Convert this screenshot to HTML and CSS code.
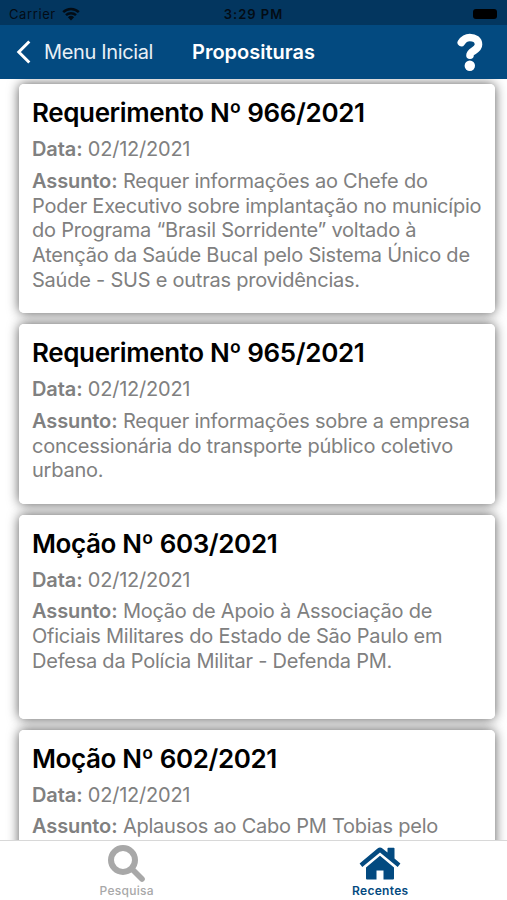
FILE: index.html
```
<!DOCTYPE html>
<html lang="pt-BR">
<head>
  <meta charset="UTF-8">
  <meta name="viewport" content="width=device-width, initial-scale=1">
  <title>Proposituras</title>
  <link rel="stylesheet" href="styles.css">
</head>
<body>

<div class="status-bar">
  <div class="carrier">
    <span>Carrier</span>
    <svg class="wifi" viewBox="0 0 18 14">
      <path d="M1.2 5.2a11 11 0 0 1 15.6 0M4 8.2a7.2 7.2 0 0 1 10 0" fill="none" stroke="currentColor" stroke-width="2.5"/>
      <path d="M5.9 10.3a4.5 4.5 0 0 1 6.2 0L9 13.5z" fill="currentColor"/>
    </svg>
  </div>
  <div class="clock">3:29 PM</div>
  <div class="battery"></div>
</div>

<header class="navbar">
  <a class="back">
    <svg class="chevron" viewBox="0 0 15 24">
      <path d="M13.3 1.5L2.8 12l10.5 10.5" fill="none" stroke="currentColor" stroke-width="3"/>
    </svg>
    <span>Menu Inicial</span>
  </a>
  <h1>Proposituras</h1>
  <svg class="help" viewBox="0 0 26 38">
    <path d="M4.3 9.6C6.5 6.2 9.2 4.5 12.8 4.500c5 0 8.700 2.500 8.700 7 0 6-8.500 6.200-8.500 10.700" fill="none" stroke="currentColor" stroke-width="7.6" stroke-linecap="round"/>
    <circle cx="12.800" cy="32.700" r="6.200" fill="#034a80"/>
    <circle cx="12.800" cy="32.700" r="5.200" fill="currentColor"/>
  </svg>
</header>

<main class="list">
  <article class="card card-1">
    <h2>Requerimento Nº 966/2021</h2>
    <p class="date"><b>Data:</b> 02/12/2021</p>
    <p class="subject"><b>Assunto:</b> Requer informações ao Chefe do<br>
      Poder Executivo sobre implantação no município<br>
      do Programa “Brasil Sorridente” voltado à<br>
      Atenção da Saúde Bucal pelo Sistema Único de<br>
      Saúde - SUS e outras providências.</p>
  </article>
  <article class="card card-2">
    <h2>Requerimento Nº 965/2021</h2>
    <p class="date"><b>Data:</b> 02/12/2021</p>
    <p class="subject"><b>Assunto:</b> Requer informações sobre a empresa<br>
      concessionária do transporte público coletivo<br>
      urbano.</p>
  </article>
  <article class="card card-3">
    <h2>Moção Nº 603/2021</h2>
    <p class="date"><b>Data:</b> 02/12/2021</p>
    <p class="subject"><b>Assunto:</b> Moção de Apoio à Associação de<br>
      Oficiais Militares do Estado de São Paulo em<br>
      Defesa da Polícia Militar - Defenda PM.</p>
  </article>
  <article class="card card-4">
    <h2>Moção Nº 602/2021</h2>
    <p class="date"><b>Data:</b> 02/12/2021</p>
    <p class="subject"><b>Assunto:</b> Aplausos ao Cabo PM Tobias pelo</p>
  </article>
</main>

<nav class="tabs">
  <a class="tab">
    <svg class="icon-search" viewBox="0 0 37 37">
      <circle cx="15" cy="15" r="12" fill="none" stroke="currentColor" stroke-width="6"/>
      <path d="M24.5 24.5l9.5 9.5" stroke="currentColor" stroke-width="5.6" stroke-linecap="round"/>
    </svg>
    <span>Pesquisa</span>
  </a>
  <a class="tab active">
    <svg class="icon-home" viewBox="0 0 42 33">
      <path d="M21 8.800L7 20.500V31.500a1 1 0 0 0 1 1H17.500V23.500h7V32.500h9.500a1 1 0 0 0 1-1V20.500z" fill="currentColor"/>
      <path d="M.6 16.500L18.500 1.400q2.500-1.800 5 0L28.500 5.600V1.500q0-.7.700-.7h5.600q.7 0 .7.700v10l5.900 5-2.700 3.400L21 5.400 3.300 19.900z" fill="currentColor"/>
    </svg>
    <span>Recentes</span>
  </a>
</nav>

</body>
</html>
```
FILE: styles.css
```
* {
  box-sizing: border-box;
}
body {
  margin: 0;
  height: 900px;
  display: flex;
  flex-direction: column;
  overflow: hidden;
  background: #fff;
  font-family: Inter, "Liberation Sans", sans-serif;
}
h1, h2, p {
  margin: 0;
  white-space: nowrap;
}
.status-bar {
  display: grid;
  grid-template-columns: 1fr auto 1fr;
  align-items: center;
  flex: none;
  height: 25px;
  padding: 3px 9px 0;
  background: #03365f;
  color: #030c15;
  font-size: 13px;
}
.carrier {
  display: flex;
  align-items: center;
  gap: 6px;
  letter-spacing: 0.6px;
}
.wifi {
  width: 18px;
  height: 14px;
}
.clock {
  font-weight: 600;
  letter-spacing: 1px;
}
.battery {
  justify-self: end;
  width: 24px;
  height: 10px;
  margin-right: 1px;
  border-radius: 3px;
  background: #000;
}
.navbar {
  display: flex;
  align-items: center;
  flex: none;
  height: 54px;
  padding: 0 24px 0 16px;
  background: #034a80;
  color: #fff;
}
.back {
  display: flex;
  align-items: center;
  gap: 13px;
  width: 176px;
  font-size: 20px;
  letter-spacing: -0.36px;
  color: #e8f0f6;
}
.chevron {
  width: 15px;
  height: 24px;
  color: #fff;
}
.navbar h1 {
  font-size: 20px;
  font-weight: 600;
}
.help {
  width: 26px;
  height: 38px;
  margin-left: auto;
}
.list {
  flex: 1;
  min-height: 0;
  display: flex;
  flex-direction: column;
  gap: 11px;
  padding: 5px 12px 0 19px;
  overflow: hidden;
  isolation: isolate;
}
.card {
  position: relative;
  flex: none;
  padding: 13px 13px 0;
  border-radius: 5px;
  background: #fff;
  color: #808080;
}
/* shadow sits behind every card, so it never darkens a neighbour */
.card::before {
  content: "";
  position: absolute;
  inset: 0;
  z-index: -1;
  border-radius: 5px;
  box-shadow: 0 0 12px 0 rgba(0, 0, 0, 0.65);
}
.card-1 {
  height: 229px;
}
.card-2 {
  height: 179.5px;
}
.card-3 {
  height: 204px;
}
.card-4 {
  height: 204px;
}
.card h2 {
  font-size: 26px;
  line-height: 32px;
  font-weight: 600;
  letter-spacing: -0.38px;
  color: #000;
}
.date, .subject {
  font-size: 20px;
  line-height: 24.8px;
  letter-spacing: -0.23px;
}
.date {
  margin-top: 8px;
}
.subject {
  margin-top: 7px;
}
.card b {
  font-weight: 600;
  letter-spacing: -0.1px;
}
.tabs {
  display: flex;
  flex: none;
  height: 60px;
  border-top: 1px solid #d8d8d8;
  background: #fff;
}
.tab {
  flex: 1;
  display: flex;
  flex-direction: column;
  align-items: center;
  padding-top: 4px;
  font-size: 12px;
  line-height: 15px;
  font-weight: 500;
  letter-spacing: 0.3px;
  color: #a8a8a8;
}
.tab span {
  margin-top: 1px;
}
.tab.active {
  color: #034a80;
  font-weight: 600;
}
.icon-search {
  width: 37px;
  height: 37px;
}
.icon-home {
  width: 42px;
  height: 33px;
  margin: 2px 0;
}
```
